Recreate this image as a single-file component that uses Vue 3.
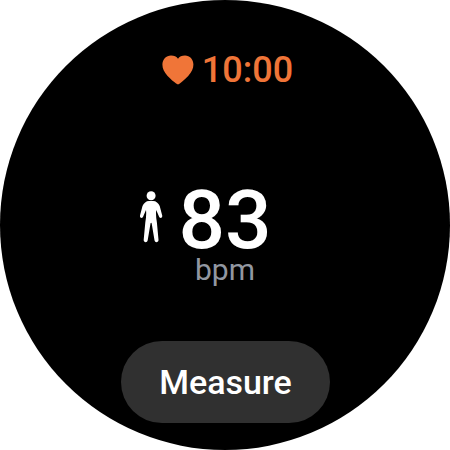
<script setup>
const time = '10:00'
const rate = 83
</script>

<template>
  <main class="watch">
    <header class="status">
      <svg class="heart" viewBox="0 0 32 30" aria-hidden="true">
        <path d="M16 29.5C14 28.4 9.8 25.4 5.6 20.9C2.1 17.2 .4 13.8 .4 9.6C.4 4.3 4.2 .5 9 .5C12.1 .5 14.6 1.6 16 3.8C17.4 1.6 19.9 .5 23 .5C27.8 .5 31.4 4.3 31.4 9.6C31.4 13.8 29.7 17.2 26.2 20.9C22 25.4 18 28.4 16 29.5Z" />
      </svg>
      <time class="time">{{ time }}</time>
    </header>
    <section class="reading">
      <svg class="person" viewBox="0 0 24 52" aria-hidden="true">
        <circle cx="12.1" cy="4.8" r="4.5" />
        <path d="M10 10H14.2C17 10 19.4 12 20.7 15L23.2 24.4C23.8 27.2 20.8 28 20 25.6L17.2 19C16.7 23 17.2 27 17.9 31.5L19.5 48.8C19.8 51.8 15.9 52.1 15.5 49.3L12.7 32.5C12.5 31.4 11.7 31.4 11.5 32.5L8.7 49.3C8.3 52.1 4.4 51.8 4.7 48.8L6.3 31.5C7 27 7.5 23 7 19L4.2 25.6C3.4 28 .4 27.2 1 24.4L3.5 15C4.8 12 7.2 10 10 10Z" />
      </svg>
      <span class="rate">{{ rate }}</span>
    </section>
    <div class="unit">bpm</div>
    <button class="measure" type="button">Measure</button>
  </main>
</template>

<style>
body {
  background: #fff;
}
</style>

<style scoped>
.watch {
  box-sizing: border-box;
  width: 450px;
  height: 450px;
  padding-top: 49px;
  border-radius: 50%;
  background: #000;
  display: flex;
  flex-direction: column;
  align-items: center;
  font-family: Roboto, sans-serif;
}
.status {
  height: 42px;
  margin-left: 5px;
  display: flex;
  align-items: center;
  gap: 8px;
  color: #f07538;
}
.heart {
  width: 32px;
  height: 30px;
  fill: currentColor;
}
.time {
  font-size: 36px;
  line-height: 42px;
  font-weight: 500;
}
.reading {
  height: 64px;
  margin: 97px 39px 0 0;
  display: flex;
  align-items: center;
  gap: 15px;
  color: #fff;
}
.person {
  width: 24px;
  height: 52px;
  margin-bottom: 7px;
  fill: currentColor;
}
.rate {
  font-size: 82px;
  line-height: 64px;
  font-weight: 500;
}
.unit {
  height: 36px;
  font-size: 30px;
  line-height: 36px;
  color: #9297a1;
}
.measure {
  width: 209px;
  height: 82px;
  margin-top: 53px;
  padding: 0 0 0 1px;
  border: 0;
  border-radius: 41px;
  background: #303030;
  color: #fff;
  font: 500 34px/82px Roboto, sans-serif;
}
</style>
